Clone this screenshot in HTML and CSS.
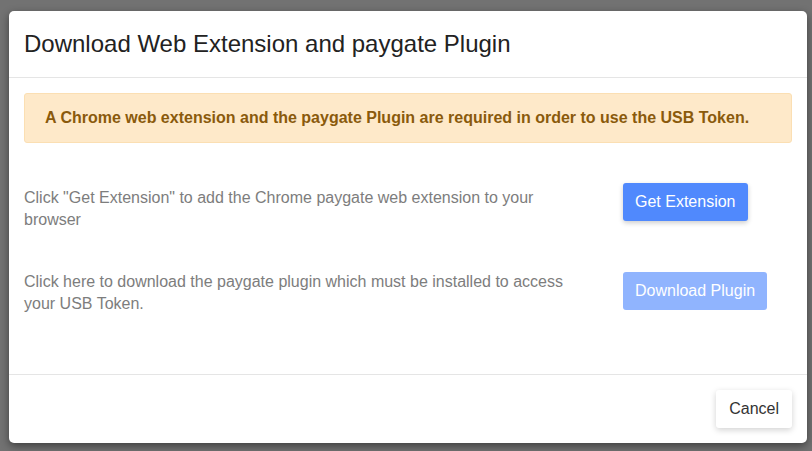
FILE: index.html
```html
<!DOCTYPE html>
<html lang="en">
<head>
<meta charset="utf-8">
<title>Download Web Extension and paygate Plugin</title>
<link rel="stylesheet" href="styles.css">
</head>
<body>
<div class="modal">
  <div class="modal-header">
    <h4 class="modal-title">Download Web Extension and paygate Plugin</h4>
  </div>
  <div class="modal-body">
    <div class="alert">A Chrome web extension and the paygate Plugin are required in order to use the USB Token.</div>
    <div class="row row-ext">
      <p class="desc">Click "Get Extension" to add the Chrome paygate web extension to your browser</p>
      <div class="action"><button class="btn btn-primary">Get Extension</button></div>
    </div>
    <div class="row row-plugin">
      <p class="desc">Click here to download the paygate plugin which must be installed to access your USB Token.</p>
      <div class="action"><button class="btn btn-primary disabled">Download Plugin</button></div>
    </div>
  </div>
  <div class="modal-footer">
    <button class="btn btn-default">Cancel</button>
  </div>
</div>
</body>
</html>
```
FILE: styles.css
```css
html, body {
  margin: 0;
  padding: 0;
}
body {
  background: #727272;
  font-family: "Liberation Sans", Arial, sans-serif;
  width: 812px;
  height: 451px;
  overflow: hidden;
}
.modal {
  margin: 11px 0 0 9px;
  width: 798px;
  background: #fff;
  border-radius: 5px;
  box-shadow: 0 3px 9px rgba(0, 0, 0, 0.45);
}
.modal-header {
  padding: 20px 15px;
  border-bottom: 1px solid #e5e5e5;
}
.modal-title {
  margin: 0;
  font-size: 24px;
  line-height: 26px;
  font-weight: normal;
  color: #222;
}
.modal-body {
  padding: 15px 15px 59px;
}
.alert {
  background: #fee9c9;
  border: 1px solid #fbdfb3;
  border-radius: 3px;
  padding: 12px 20px 12px;
  font-size: 16px;
  line-height: 24px;
  font-weight: bold;
  color: #8a5a0c;
  margin-bottom: 40px;
}
.row {
  display: flex;
  align-items: flex-start;
}
.desc {
  margin: 0;
  width: 569px;
  padding-right: 30px;
  font-size: 16px;
  line-height: 22px;
  color: #7d7d7d;
}
.row-ext .desc {
  padding-top: 4px;
}
.row-ext {
  margin-bottom: 40px;
}
.row-plugin .action {
  padding-top: 1px;
}
.btn {
  font-family: "Liberation Sans", Arial, sans-serif;
  font-size: 16px;
  line-height: 22px;
  padding: 8px 12px;
  border: none;
  border-radius: 3px;
  cursor: pointer;
}
.btn-primary {
  background: #5089fd;
  color: #fff;
  box-shadow: 0 2px 5px rgba(0, 0, 0, 0.2);
}
.btn-primary.disabled {
  background: #90b4fe;
  box-shadow: none;
}
.modal-footer {
  border-top: 1px solid #e5e5e5;
  padding: 15px;
  display: flex;
  justify-content: flex-end;
}
.btn-default {
  background: #fff;
  color: #333;
  padding: 8px 13px;
  box-shadow: 0 2px 6px rgba(0, 0, 0, 0.18);
}
```
